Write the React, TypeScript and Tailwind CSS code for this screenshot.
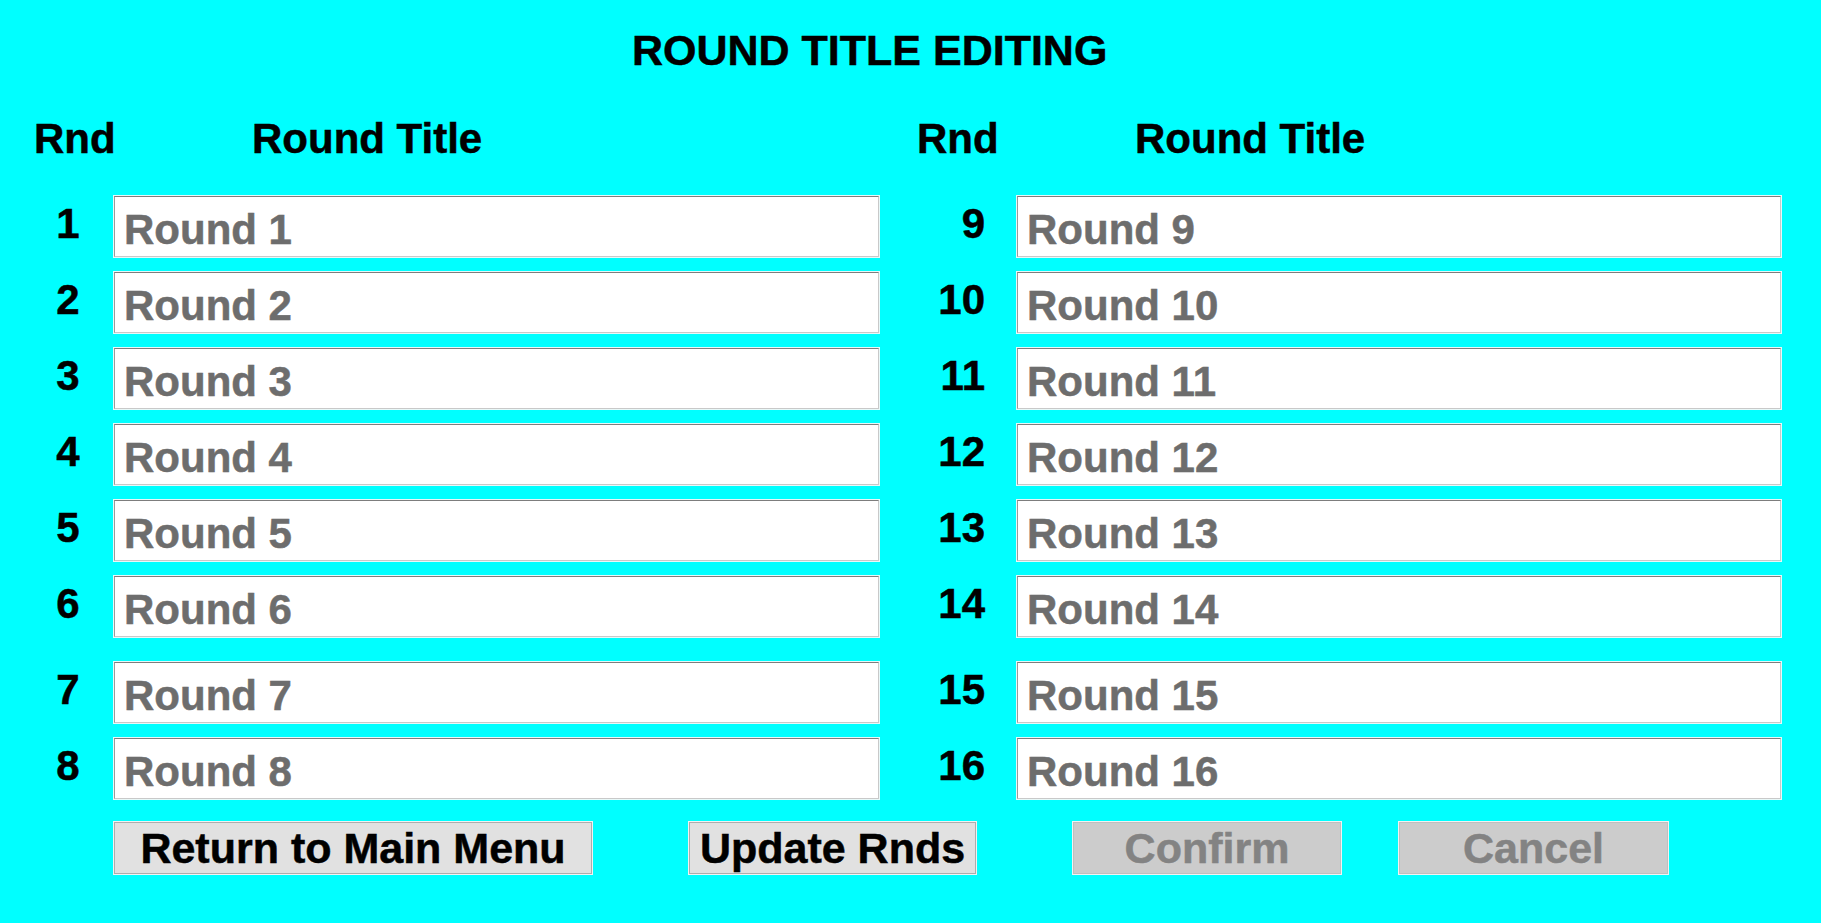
import React from "react";

const left = [1, 2, 3, 4, 5, 6, 7, 8];

function RoundInput({ n, w }: { n: number; w: string }) {
  return (
    <input
      readOnly
      defaultValue={`Round ${n}`}
      className={`${w} h-[61px] bg-white border border-[#c9c9c9] border-t-[#7d7d7d] border-l-[#9a9a9a] pl-[9px] pt-[5px] text-[42px] font-bold text-[#6d6d6d] outline-none shadow-[0_0_0_1px_#e8f8f8] [-webkit-text-stroke:0.5px_#6d6d6d]`}
    />
  );
}

export default function App() {
  return (
    <div className="w-[1821px] h-[923px] bg-[#00ffff] font-['Liberation_Sans',Arial,sans-serif] font-bold text-black flex flex-col overflow-hidden [-webkit-text-stroke:0.5px_currentColor]">
      <h1 className="pt-[26px] pl-[632px] text-[43px] leading-[48px] font-bold">ROUND TITLE EDITING</h1>

      <div className="mt-[42px] flex text-[42px] leading-[46px]">
        <div className="w-[917px] pl-[34px] flex">
          <span className="w-[218px]">Rnd</span>
          <span>Round Title</span>
        </div>
        <div className="flex">
          <span className="w-[218px]">Rnd</span>
          <span>Round Title</span>
        </div>
      </div>

      <div className="mt-[34px] flex flex-col gap-[15px]">
        {left.map((n) => (
          <div key={n} className={`flex items-start h-[61px] ${n === 7 ? "mt-[10px]" : ""}`}>
            <span className="ml-[40px] w-[56px] mt-[5px] text-center text-[42px] leading-[46px]">{n}</span>
            <div className="ml-[18px]">
              <RoundInput n={n} w="w-[765px]" />
            </div>
            <span className="w-[106px] mt-[5px] text-right text-[42px] leading-[46px]">{n + 8}</span>
            <div className="ml-[32px]">
              <RoundInput n={n + 8} w="w-[764px]" />
            </div>
          </div>
        ))}
      </div>

      <div className="mt-[23px] flex h-[52px] text-[43px] leading-none">
        <button className="ml-[114px] w-[478px] h-[52px] bg-[#e1e1e1] border border-[#adadad] shadow-[0_0_0_1px_#f2f2f2] text-black font-bold">
          Return to Main Menu
        </button>
        <button className="ml-[97px] w-[287px] h-[52px] bg-[#e1e1e1] border border-[#adadad] shadow-[0_0_0_1px_#f2f2f2] text-black font-bold">
          Update Rnds
        </button>
        <button disabled className="ml-[97px] w-[268px] h-[52px] bg-[#cccccc] border border-[#bfbfbf] shadow-[0_0_0_1px_#f2f2f2] text-[#838383] font-bold">
          Confirm
        </button>
        <button disabled className="ml-[58px] w-[269px] h-[52px] bg-[#cccccc] border border-[#bfbfbf] shadow-[0_0_0_1px_#f2f2f2] text-[#838383] font-bold">
          Cancel
        </button>
      </div>
    </div>
  );
}
